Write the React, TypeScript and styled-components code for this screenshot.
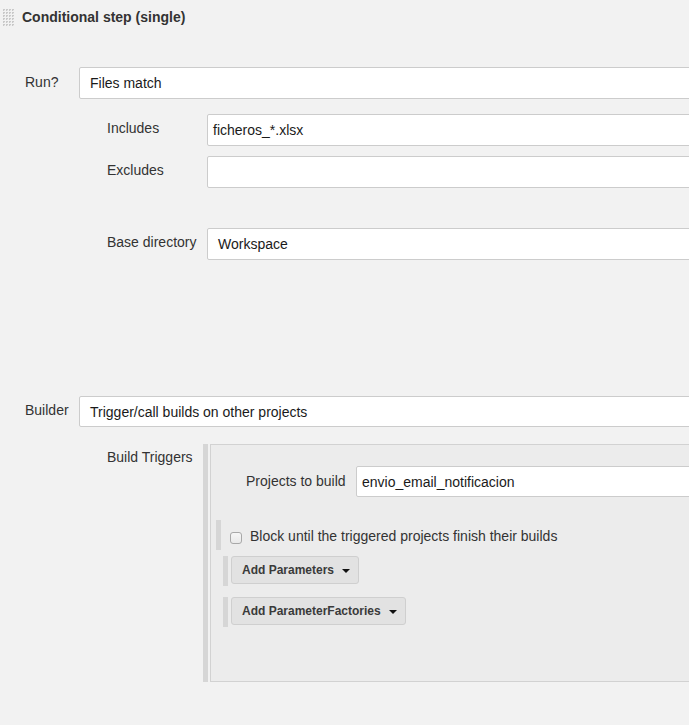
import { createGlobalStyle } from 'styled-components';
import styled from 'styled-components';

const GlobalStyle = createGlobalStyle`
  html, body {
    margin: 0;
    padding: 0;
    background: #f2f2f2;
  }
  body {
    font-family: "Liberation Sans", Arial, Helvetica, sans-serif;
    font-size: 14px;
    color: #333;
    overflow: hidden;
  }
`;

const Page = styled.div`
  width: 689px;
  height: 725px;
  overflow: hidden;
`;

const Form = styled.div`
  width: 780px;
`;

const Header = styled.div`
  display: flex;
  align-items: flex-start;
  padding: 9px 0 0 3px;
`;

const Handle = styled.svg`
  display: block;
  flex: none;
`;

const Title = styled.div`
  margin-left: 8px;
  font-weight: bold;
  font-size: 14px;
  line-height: 17px;
  color: #333;
`;

const Row = styled.div<{ $indent: number; $top: number }>`
  display: flex;
  align-items: flex-start;
  padding-left: ${(p) => p.$indent}px;
  margin-top: ${(p) => p.$top}px;
`;

const Label = styled.div<{ $width: number; $pad?: number }>`
  flex: none;
  width: ${(p) => p.$width}px;
  padding-top: ${(p) => p.$pad ?? 6}px;
  line-height: 17px;
  font-size: 14px;
  color: #333;
  white-space: nowrap;
`;

const Field = styled.div<{ $select?: boolean; $height?: number }>`
  flex: 1;
  box-sizing: border-box;
  height: ${(p) => p.$height ?? 32}px;
  display: flex;
  align-items: center;
  padding-left: ${(p) => (p.$select ? 10 : 5)}px;
  background: #fff;
  border: 1px solid #ccc;
  border-radius: 2px;
  font-size: 14px;
  color: #1a1a1a;
  white-space: nowrap;
`;

const Group = styled.div`
  flex: 1;
  display: flex;
  align-items: stretch;
`;

const SideBar = styled.div`
  flex: none;
  width: 5px;
  background: #d6d6d6;
`;

const Panel = styled.div`
  flex: 1;
  margin-left: 2px;
  border: 1px solid #d2d2d2;
  border-right: none;
  background: #ececec;
  padding-top: 21px;
  padding-bottom: 54px;
`;

const BarRow = styled.div<{ $indent: number; $top: number }>`
  display: flex;
  align-items: flex-start;
  height: 30px;
  margin-left: ${(p) => p.$indent}px;
  margin-top: ${(p) => p.$top}px;
`;

const RowBar = styled.div`
  flex: none;
  width: 5px;
  height: 30px;
  background: #d6d6d6;
`;

const CheckBox = styled.span`
  flex: none;
  box-sizing: border-box;
  width: 12px;
  height: 12px;
  margin: 12px 0 0 9px;
  border: 1px solid #a8a8a8;
  border-radius: 3px;
  background: linear-gradient(#f6f6f6, #e9e9e9);
`;

const CheckText = styled.span`
  margin: 8px 0 0 8px;
  line-height: 17px;
  font-size: 14px;
  color: #333;
  white-space: nowrap;
`;

const Button = styled.button`
  box-sizing: border-box;
  height: 28px;
  margin-left: 3px;
  padding: 0 8px 0 10px;
  display: flex;
  align-items: center;
  gap: 8px;
  background: #e2e2e2;
  border: 1px solid #cfcfcf;
  border-radius: 3px;
  font-family: "Liberation Sans", Arial, Helvetica, sans-serif;
  font-weight: bold;
  font-size: 12px;
  color: #3a3a3a;
  cursor: pointer;
`;

const Caret = styled.span`
  width: 0;
  height: 0;
  border-left: 4px solid transparent;
  border-right: 4px solid transparent;
  border-top: 4px solid #111;
  margin-top: 1px;
`;

const GripIcon = () => (
  <Handle width="11" height="17" viewBox="0 0 11 17">
    <defs>
      <pattern id="grip" width="3" height="3" patternUnits="userSpaceOnUse">
        <rect x="0" y="0" width="2" height="2" fill="#c9c9c9" />
        <rect x="1" y="1" width="1" height="1" fill="#e6e6e6" />
      </pattern>
    </defs>
    <rect width="11" height="17" fill="url(#grip)" />
  </Handle>
);

const DropButton = ({ text, top }: { text: string; top: number }) => (
  <BarRow $indent={12} $top={top}>
    <RowBar />
    <Button type="button">
      {text}
      <Caret />
    </Button>
  </BarRow>
);

export default function App() {
  return (
    <Page>
      <GlobalStyle />
      <Form>
        <Header>
          <GripIcon />
          <Title>Conditional step (single)</Title>
        </Header>

        <Row $indent={25} $top={41}>
          <Label $width={54} $pad={7}>Run?</Label>
          <Field $select>Files match</Field>
        </Row>
        <Row $indent={107} $top={15}>
          <Label $width={100}>Includes</Label>
          <Field>ficheros_*.xlsx</Field>
        </Row>
        <Row $indent={107} $top={10}>
          <Label $width={100}>Excludes</Label>
          <Field />
        </Row>
        <Row $indent={107} $top={40}>
          <Label $width={100}>Base directory</Label>
          <Field $select>Workspace</Field>
        </Row>

        <Row $indent={25} $top={136}>
          <Label $width={54} $pad={6}>Builder</Label>
          <Field $select $height={31}>Trigger/call builds on other projects</Field>
        </Row>
        <Row $indent={107} $top={17}>
          <Label $width={96} $pad={5}>Build Triggers</Label>
          <Group>
            <SideBar />
            <Panel>
              <Row $indent={35} $top={0}>
                <Label $width={110} $pad={7}>Projects to build</Label>
                <Field $height={31}>envio_email_notificacion</Field>
              </Row>
              <BarRow $indent={5} $top={23}>
                <RowBar />
                <CheckBox />
                <CheckText>Block until the triggered projects finish their builds</CheckText>
              </BarRow>
              <DropButton text="Add Parameters" top={6} />
              <DropButton text="Add ParameterFactories" top={11} />
            </Panel>
          </Group>
        </Row>
      </Form>
    </Page>
  );
}
